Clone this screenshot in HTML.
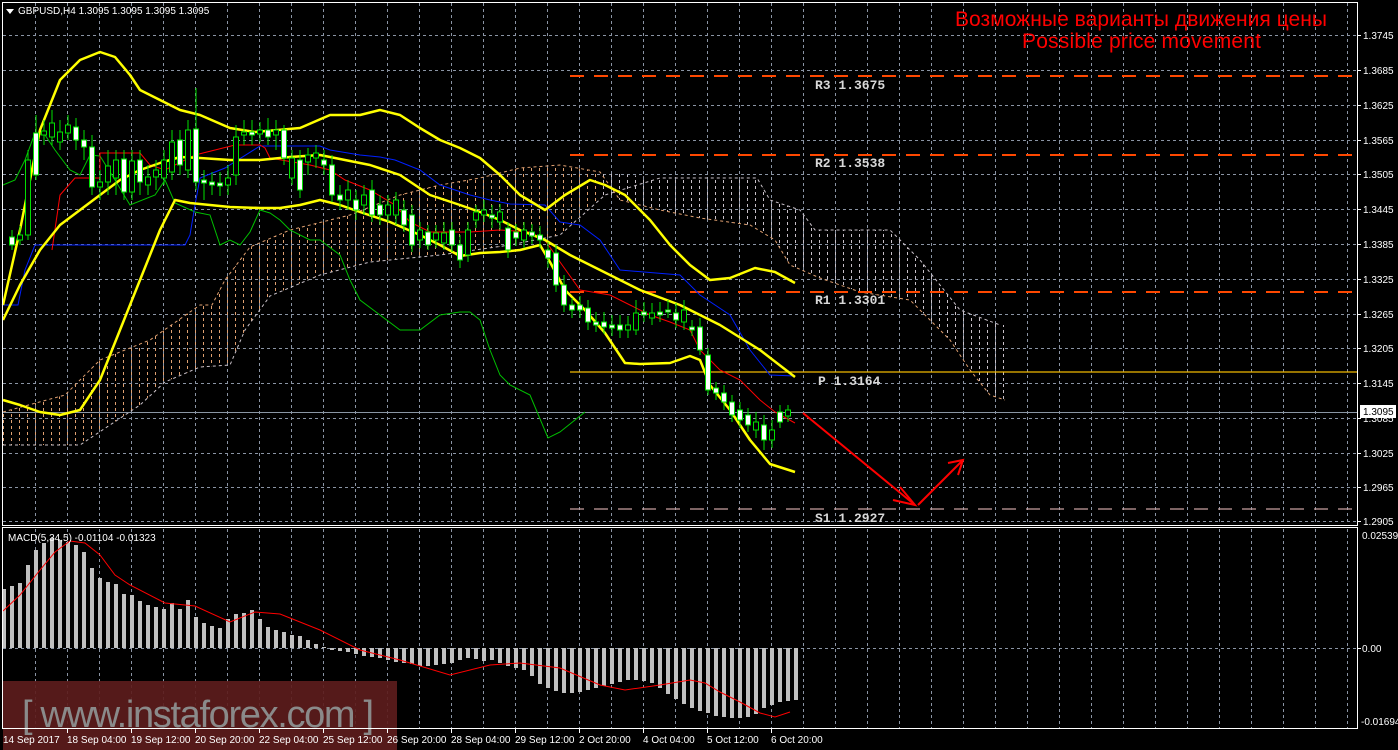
<!DOCTYPE html>
<html><head><meta charset="utf-8"><style>
html,body{margin:0;padding:0;background:#000;width:1398px;height:750px;overflow:hidden}
svg{display:block}
.ax{font-family:"Liberation Sans",sans-serif;font-size:10px;fill:#fff}
.lv{font-family:"Liberation Mono",monospace;font-size:13px;font-weight:bold;fill:#d8d8d8}
</style></head><body>
<svg width="1398" height="750" viewBox="0 0 1398 750" xmlns="http://www.w3.org/2000/svg">
<defs>
<pattern id="h" width="8" height="6" patternUnits="userSpaceOnUse"><rect x="3" y="0" width="1" height="3" fill="#e0a070"/></pattern>
<pattern id="h2" width="8" height="6" patternUnits="userSpaceOnUse"><rect x="3" y="0" width="1" height="3" fill="#c8c0c8"/></pattern>
<clipPath id="cl"><rect x="0" y="0" width="600" height="530"/></clipPath>
<clipPath id="cr"><rect x="600" y="0" width="800" height="530"/></clipPath>
</defs>
<g stroke="#8a94a4" stroke-width="1" stroke-dasharray="3,3" fill="none">
<path d="M3 35.5H1357M3 70.5H1357M3 105.5H1357M3 140.5H1357M3 174.5H1357M3 209.5H1357M3 244.5H1357M3 279.5H1357M3 314.5H1357M3 348.5H1357M3 383.5H1357M3 418.5H1357M3 453.5H1357M3 487.5H1357M3 521.5H1357M3 648.5H1357"/>
<path d="M35.5 3V525M67.5 3V525M99.5 3V525M131.5 3V525M163.5 3V525M195.5 3V525M227.5 3V525M259.5 3V525M291.5 3V525M323.5 3V525M355.5 3V525M387.5 3V525M419.5 3V525M451.5 3V525M483.5 3V525M515.5 3V525M547.5 3V525M579.5 3V525M611.5 3V525M643.5 3V525M675.5 3V525M707.5 3V525M739.5 3V525M771.5 3V525M803.5 3V525M835.5 3V525M867.5 3V525M899.5 3V525M931.5 3V525M963.5 3V525M995.5 3V525M1027.5 3V525M1059.5 3V525M1091.5 3V525M1123.5 3V525M1155.5 3V525M1187.5 3V525M1219.5 3V525M1251.5 3V525M1283.5 3V525M1315.5 3V525M1347.5 3V525"/>
<path d="M35.5 529V728M67.5 529V728M99.5 529V728M131.5 529V728M163.5 529V728M195.5 529V728M227.5 529V728M259.5 529V728M291.5 529V728M323.5 529V728M355.5 529V728M387.5 529V728M419.5 529V728M451.5 529V728M483.5 529V728M515.5 529V728M547.5 529V728M579.5 529V728M611.5 529V728M643.5 529V728M675.5 529V728M707.5 529V728M739.5 529V728M771.5 529V728M803.5 529V728M835.5 529V728M867.5 529V728M899.5 529V728M931.5 529V728M963.5 529V728M995.5 529V728M1027.5 529V728M1059.5 529V728M1091.5 529V728M1123.5 529V728M1155.5 529V728M1187.5 529V728M1219.5 529V728M1251.5 529V728M1283.5 529V728M1315.5 529V728M1347.5 529V728"/>
</g>
<g>
<polygon points="3,412 65,395 100,360 150,340 200,305 212,305 225,280 250,247 290,230 350,215 400,195 440,185 480,178 520,168 560,165 600,172 660,178 757,178 770,200 800,210 815,230 890,230 920,260 960,310 1000,325 1005,325 1005,400 990,395 970,370 950,340 930,320 910,300 860,292 820,278 790,265 775,240 750,225 700,218 660,210 620,200 605,195 560,235 510,245 440,255 370,262 320,275 270,296 245,330 230,365 200,367 165,382 140,405 110,425 80,445 3,445" fill="url(#h)" clip-path="url(#cl)"/>
<polygon points="3,412 65,395 100,360 150,340 200,305 212,305 225,280 250,247 290,230 350,215 400,195 440,185 480,178 520,168 560,165 600,172 660,178 757,178 770,200 800,210 815,230 890,230 920,260 960,310 1000,325 1005,325 1005,400 990,395 970,370 950,340 930,320 910,300 860,292 820,278 790,265 775,240 750,225 700,218 660,210 620,200 605,195 560,235 510,245 440,255 370,262 320,275 270,296 245,330 230,365 200,367 165,382 140,405 110,425 80,445 3,445" fill="url(#h2)" clip-path="url(#cr)"/>
<polyline points="3,412 65,395 100,360 150,340 200,305 212,305 225,280 250,247 290,230 350,215 400,195 440,185 480,178 520,168 560,165 600,172 620,200 660,210 700,218 750,225 775,240 790,265 820,278 860,292 910,300 930,320 950,340 970,370 990,395 1005,400" fill="none" stroke="#e0a070" stroke-dasharray="3,3"/>
<polyline points="3,445 80,445 110,425 140,405 165,382 200,367 230,365 245,330 270,296 320,275 370,262 440,255 510,245 560,235 605,195 660,178 757,178 770,200 800,210 815,230 890,230 920,260 960,310 1000,325" fill="none" stroke="#c8c0c8" stroke-dasharray="3,3"/>
</g>
<path d="M570 76H1357M570 155H1357M570 292H1357" stroke="#ff4800" stroke-width="2" stroke-dasharray="14,10"/>
<path d="M570 372H1357" stroke="#f0b800" stroke-width="1.3"/>
<path d="M570 509H1357" stroke="#c8a0a0" stroke-width="1.3" stroke-dasharray="14,10"/>
<path d="M3 412.5H1357" stroke="#8a96a4" stroke-width="1"/>
<text class="lv" x="815" y="89">R3 1.3675</text>
<text class="lv" x="815" y="167">R2 1.3538</text>
<text class="lv" x="815" y="304">R1 1.3301</text>
<text class="lv" x="818" y="385">P 1.3164</text>
<text class="lv" x="815" y="522">S1 1.2927</text>
<polyline fill="none" stroke="#00c000" stroke-width="1" points="3,185 15,180 25,160 35,133 45,135 55,150 70,170 80,175 90,155 100,156 115,180 130,205 155,195 165,180 175,203 195,212 210,215 220,245 230,240 240,245 250,232 260,210 270,213 280,220 290,230 310,240 320,240 340,255 350,280 360,300 380,315 400,330 420,330 440,315 460,312 470,312 480,320 490,350 500,375 510,385 530,395 548,438 560,432 575,420 585,412"/>
<polyline fill="none" stroke="#0020ff" stroke-width="1" points="3,305 18,305 25,270 35,245 60,245 130,245 185,245 190,235 195,205 200,178 225,168 260,146 320,146 330,150 360,155 380,157 395,160 420,170 440,185 470,195 490,200 510,204 545,205 560,222 580,225 600,240 620,270 680,275 700,295 730,315 750,350 770,375 795,376"/>
<polyline fill="none" stroke="#ff0000" stroke-width="1" points="52,250 60,195 75,178 100,178 100,153 140,153 150,165 165,170 195,155 235,145 260,145 265,148 270,158 310,165 330,170 345,180 370,190 395,205 410,222 430,232 470,232 500,230 530,232 545,240 560,262 580,290 610,295 630,305 650,315 670,322 690,330 700,350 720,370 740,380 760,400 775,412 795,423"/>
<g fill="none" stroke="#ffff00" stroke-width="2.5" stroke-linejoin="round">
<polyline points="3,305 20,230 40,130 60,80 80,60 100,52 115,57 130,75 140,90 160,100 180,110 200,115 230,128 255,132 300,128 330,115 360,115 380,110 400,115 420,128 440,140 460,148 480,158 500,175 520,195 545,210 565,195 590,180 605,185 625,195 650,220 670,245 690,265 710,280 730,278 755,268 775,272 795,283"/>
<polyline points="3,320 20,285 40,250 60,225 80,210 100,195 120,180 140,170 160,163 180,157 200,158 230,160 260,160 290,157 320,155 345,160 370,165 400,175 430,195 460,205 480,212 500,220 520,230 545,240 570,255 600,270 640,290 680,305 720,325 760,350 795,377"/>
<polyline points="3,400 20,405 40,412 60,415 80,410 100,380 120,330 140,280 160,230 175,200 190,203 230,207 260,208 280,208 300,205 320,200 340,205 360,212 390,222 420,235 440,245 460,256 480,253 500,252 520,250 540,245 550,262 565,290 585,310 605,333 625,363 640,364 670,363 690,356 700,360 710,385 730,410 750,440 770,464 795,472"/>
</g>
<g stroke="#00e000" stroke-width="1" fill="#fff">
<path fill="none" d="M12 230V250M20 226V245M28 150V240M36 115V180M44 120V145M52 110V145M60 120V150M68 115V140M76 118V150M84 130V160M92 135V195M100 170V200M108 150V195M116 150V195M124 150V200M132 150V200M140 150V195M148 165V195M156 160V190M164 150V185M172 130V180M180 130V175M188 120V178M196 88V190M204 170V200M212 172V195M220 172V196M228 165V195M236 125V185M244 120V145M252 120V145M260 122V142M268 118V145M276 120V150M284 125V165M292 150V185M300 150V198M308 148V175M316 145V168M324 150V175M332 155V202M340 185V210M348 180V210M356 190V220M364 185V215M372 180V222M380 195V225M388 195V222M396 192V225M404 200V232M412 205V252M420 222V248M428 225V250M436 225V248M444 222V250M452 222V252M460 235V268M468 222V262M476 205V228M484 200V222M492 205V228M500 204V230M508 222V258M516 224V246M524 222V248M532 224V244M540 226V248M548 242V268M556 245V292M564 275V312M572 298V318M580 296V318M588 300V330M596 312V332M604 312V334M612 315V336M620 315V338M628 316V338M636 300V335M644 302V322M652 303V325M660 302V322M668 300V318M676 303V328M684 300V330M692 320V336M700 318V355M708 348V395M716 382V400M724 385V410M732 395V422M740 402V428M748 408V432M756 412V438M764 415V450M772 420V448M780 405V428M788 405V422"/>
<rect x="9.5" y="237" width="5" height="8"/><rect x="17.5" y="235" width="5" height="5" fill="#000"/><rect x="25.5" y="160" width="5" height="75" fill="#000"/><rect x="33.5" y="133" width="5" height="42"/><rect x="41.5" y="131" width="5" height="4" fill="#000"/><rect x="49.5" y="123" width="5" height="14" fill="#000"/><rect x="57.5" y="132" width="5" height="10" fill="#000"/><rect x="65.5" y="125" width="5" height="8" fill="#000"/><rect x="73.5" y="127" width="5" height="13"/><rect x="81.5" y="140" width="5" height="7"/><rect x="89.5" y="147" width="5" height="40"/><rect x="97.5" y="182" width="5" height="5" fill="#000"/><rect x="105.5" y="166" width="5" height="16" fill="#000"/><rect x="113.5" y="160" width="5" height="18" fill="#000"/><rect x="121.5" y="159" width="5" height="33"/><rect x="129.5" y="161" width="5" height="31" fill="#000"/><rect x="137.5" y="160" width="5" height="22"/><rect x="145.5" y="177" width="5" height="8" fill="#000"/><rect x="153.5" y="170" width="5" height="7" fill="#000"/><rect x="161.5" y="160" width="5" height="18" fill="#000"/><rect x="169.5" y="142" width="5" height="30" fill="#000"/><rect x="177.5" y="140" width="5" height="25"/><rect x="185.5" y="130" width="5" height="40" fill="#000"/><rect x="193.5" y="129" width="5" height="53"/><rect x="201.5" y="180" width="5" height="3"/><rect x="209.5" y="182" width="5" height="3"/><rect x="217.5" y="183" width="5" height="3"/><rect x="225.5" y="178" width="5" height="7" fill="#000"/><rect x="233.5" y="137" width="5" height="38" fill="#000"/><rect x="241.5" y="132" width="5" height="3" fill="#000"/><rect x="249.5" y="132" width="5" height="3"/><rect x="257.5" y="130" width="5" height="4" fill="#000"/><rect x="265.5" y="130" width="5" height="7"/><rect x="273.5" y="130" width="5" height="5" fill="#000"/><rect x="281.5" y="130" width="5" height="28"/><rect x="289.5" y="158" width="5" height="20" fill="#000"/><rect x="297.5" y="160" width="5" height="30"/><rect x="305.5" y="155" width="5" height="7" fill="#000"/><rect x="313.5" y="153" width="5" height="5" fill="#000"/><rect x="321.5" y="160" width="5" height="5"/><rect x="329.5" y="165" width="5" height="30"/><rect x="337.5" y="195" width="5" height="5"/><rect x="345.5" y="190" width="5" height="10" fill="#000"/><rect x="353.5" y="200" width="5" height="10"/><rect x="361.5" y="195" width="5" height="10" fill="#000"/><rect x="369.5" y="190" width="5" height="25"/><rect x="377.5" y="205" width="5" height="10"/><rect x="385.5" y="205" width="5" height="10" fill="#000"/><rect x="393.5" y="200" width="5" height="15" fill="#000"/><rect x="401.5" y="210" width="5" height="15"/><rect x="409.5" y="215" width="5" height="30"/><rect x="417.5" y="230" width="5" height="10" fill="#000"/><rect x="425.5" y="232" width="5" height="13"/><rect x="433.5" y="233" width="5" height="7" fill="#000"/><rect x="441.5" y="233" width="5" height="10" fill="#000"/><rect x="449.5" y="230" width="5" height="15"/><rect x="457.5" y="245" width="5" height="15"/><rect x="465.5" y="230" width="5" height="25" fill="#000"/><rect x="473.5" y="212" width="5" height="8" fill="#000"/><rect x="481.5" y="210" width="5" height="5" fill="#000"/><rect x="489.5" y="215" width="5" height="3"/><rect x="497.5" y="212" width="5" height="10" fill="#000"/><rect x="505.5" y="228" width="5" height="22"/><rect x="513.5" y="232" width="5" height="6"/><rect x="521.5" y="230" width="5" height="10" fill="#000"/><rect x="529.5" y="232" width="5" height="4"/><rect x="537.5" y="235" width="5" height="5"/><rect x="545.5" y="250" width="5" height="8"/><rect x="553.5" y="253" width="5" height="32"/><rect x="561.5" y="285" width="5" height="20"/><rect x="569.5" y="305" width="5" height="5"/><rect x="577.5" y="305" width="5" height="5"/><rect x="585.5" y="308" width="5" height="14"/><rect x="593.5" y="322" width="5" height="3"/><rect x="601.5" y="322" width="5" height="5"/><rect x="609.5" y="325" width="5" height="3"/><rect x="617.5" y="325" width="5" height="5"/><rect x="625.5" y="325" width="5" height="5" fill="#000"/><rect x="633.5" y="313" width="5" height="17" fill="#000"/><rect x="641.5" y="312" width="5" height="3"/><rect x="649.5" y="313" width="5" height="5" fill="#000"/><rect x="657.5" y="312" width="5" height="3"/><rect x="665.5" y="310" width="5" height="2"/><rect x="673.5" y="313" width="5" height="7"/><rect x="681.5" y="310" width="5" height="12" fill="#000"/><rect x="689.5" y="327" width="5" height="3"/><rect x="697.5" y="327" width="5" height="23"/><rect x="705.5" y="355" width="5" height="35"/><rect x="713.5" y="388" width="5" height="5"/><rect x="721.5" y="393" width="5" height="9"/><rect x="729.5" y="402" width="5" height="13"/><rect x="737.5" y="410" width="5" height="10"/><rect x="745.5" y="415" width="5" height="10"/><rect x="753.5" y="422" width="5" height="8" fill="#000"/><rect x="761.5" y="425" width="5" height="15"/><rect x="769.5" y="430" width="5" height="10" fill="#000"/><rect x="777.5" y="412" width="5" height="10"/><rect x="785.5" y="410" width="5" height="6" fill="#000"/>
</g>
<g stroke="#ff0000" stroke-width="2" fill="none">
<path d="M803 413L915 505"/><path d="M900 487L915 505L893 500"/>
<path d="M918 505L963 460"/><path d="M948 463L963 460L958 475"/>
</g>
<text x="955" y="26" font-family="Liberation Sans, sans-serif" font-size="21" fill="#ff0000" textLength="372">Возможные варианты движения цены</text>
<text x="1022" y="48" font-family="Liberation Sans, sans-serif" font-size="21" fill="#ff0000" textLength="239">Possible price movement</text>
<path stroke="#c0c0c0" stroke-width="4" fill="none" d="M4 648V589M12 648V586M20 648V583M28 648V565M36 648V550M44 648V543M52 648V538M60 648V540M68 648V542M76 648V545M84 648V552M92 648V568M100 648V578M108 648V582M116 648V584M124 648V594M132 648V595M140 648V601M148 648V605M156 648V607M164 648V609M172 648V603M180 648V609M188 648V600M196 648V617M204 648V623M212 648V626M220 648V628M228 648V619M236 648V614M244 648V613M252 648V610M260 648V619M268 648V627M276 648V630M284 648V632M292 648V635M300 648V636M308 648V640M316 648V644M324 648V647M332 648V650M340 648V651M348 648V652M356 648V654M364 648V656M372 648V657M380 648V658M388 648V660M396 648V662M404 648V663M412 648V664M420 648V666M428 648V666M436 648V665M444 648V664M452 648V663M460 648V660M468 648V658M476 648V659M484 648V661M492 648V660M500 648V663M508 648V666M516 648V668M524 648V670M532 648V676M540 648V684M548 648V688M556 648V691M564 648V693M572 648V693M580 648V692M588 648V690M596 648V688M604 648V686M612 648V684M620 648V682M628 648V680M636 648V680M644 648V681M652 648V683M660 648V688M668 648V694M676 648V699M684 648V704M692 648V708M700 648V711M708 648V713M716 648V716M724 648V717M732 648V718M740 648V718M748 648V717M756 648V714M764 648V708M772 648V705M780 648V702M788 648V701M796 648V700"/>
<polyline fill="none" stroke="#ff0000" stroke-width="1" points="3,611 20,595 40,570 55,552 70,541 85,543 100,555 115,575 130,585 165,603 195,606 230,622 255,612 280,614 320,630 360,650 400,660 450,675 490,665 520,663 560,668 600,685 625,690 660,685 690,680 705,683 720,692 740,702 760,713 775,717 790,712"/>
<text x="8" y="541" font-family="Liberation Sans, sans-serif" font-size="10" fill="#fff">MACD(5,34,5) -0.01104 -0.01323</text>
<rect x="3" y="681" width="394" height="69" fill="#5c1c1c" opacity="0.92"/>
<text x="22" y="727" font-family="Liberation Sans, sans-serif" font-size="38" fill="#8a8a8a" textLength="352">[ www.instaforex.com ]</text>
<g fill="none" stroke="#fff" stroke-width="1">
<rect x="2.5" y="2.5" width="1355" height="523"/>
<rect x="2.5" y="527.5" width="1355" height="201"/>
</g>
<path d="M1357 35.5h4M1357 70.5h4M1357 105.5h4M1357 140.5h4M1357 174.5h4M1357 209.5h4M1357 244.5h4M1357 279.5h4M1357 314.5h4M1357 348.5h4M1357 383.5h4M1357 418.5h4M1357 453.5h4M1357 487.5h4M1357 521.5h4M1357 648.5h4M67.5 729v4M131.5 729v4M195.5 729v4M259.5 729v4M323.5 729v4M387.5 729v4M451.5 729v4M515.5 729v4M579.5 729v4M643.5 729v4M707.5 729v4M771.5 729v4" stroke="#fff"/>
<polygon points="6,9 14,9 10,14" fill="#fff"/>
<text x="18" y="14" class="ax">GBPUSD,H4  1.3095 1.3095 1.3095 1.3095</text>
<g class="ax">
<text x="1363" y="39">1.3745</text><text x="1363" y="74">1.3685</text><text x="1363" y="109">1.3625</text><text x="1363" y="144">1.3565</text><text x="1363" y="178">1.3505</text><text x="1363" y="213">1.3445</text><text x="1363" y="248">1.3385</text><text x="1363" y="283">1.3325</text><text x="1363" y="318">1.3265</text><text x="1363" y="352">1.3205</text><text x="1363" y="387">1.3145</text><text x="1363" y="422">1.3085</text><text x="1363" y="457">1.3025</text><text x="1363" y="491">1.2965</text><text x="1363" y="525">1.2905</text>
<text x="1362" y="539">0.02539</text><text x="1362" y="652">0.00</text><text x="1361" y="725">-0.01694</text>
</g>
<rect x="1360" y="405" width="36" height="13" fill="#fff"/>
<text x="1363" y="415" font-family="Liberation Sans, sans-serif" font-size="10" fill="#000">1.3095</text>
<g class="ax">
<text x="3" y="743">14 Sep 2017</text><text x="67" y="743">18 Sep 04:00</text><text x="131" y="743">19 Sep 12:00</text><text x="195" y="743">20 Sep 20:00</text><text x="259" y="743">22 Sep 04:00</text><text x="323" y="743">25 Sep 12:00</text><text x="387" y="743">26 Sep 20:00</text><text x="451" y="743">28 Sep 04:00</text><text x="515" y="743">29 Sep 12:00</text><text x="579" y="743">2 Oct 20:00</text><text x="643" y="743">4 Oct 04:00</text><text x="707" y="743">5 Oct 12:00</text><text x="771" y="743">6 Oct 20:00</text>
</g>
</svg>
</body></html>
